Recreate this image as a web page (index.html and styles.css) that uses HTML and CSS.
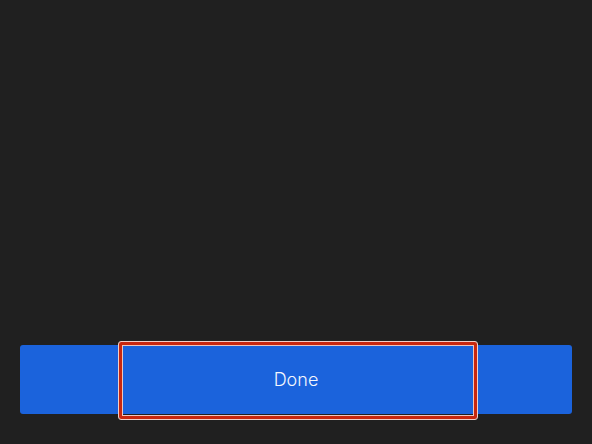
FILE: index.html
```html
<!DOCTYPE html>
<html>
<head>
<meta charset="utf-8">
<link rel="stylesheet" href="styles.css">
</head>
<body>
<main class="screen">
  <div class="footer">
    <button class="done-btn">Done</button>
    <div class="highlight"></div>
  </div>
</main>
</body>
</html>
```
FILE: styles.css
```css
html, body {
  margin: 0;
  padding: 0;
  background: #202020;
}
.screen {
  width: 592px;
  height: 444px;
  display: flex;
  flex-direction: column;
  justify-content: flex-end;
  padding: 0 20px 30px;
  box-sizing: border-box;
}
.footer {
  position: relative;
  height: 69px;
}
.done-btn {
  width: 100%;
  height: 100%;
  border: none;
  border-radius: 3px;
  background: #1b63dc;
  color: #f4f7fd;
  font-family: "Inter", "Noto Sans", sans-serif;
  font-size: 18px;
  font-weight: 300;
  padding: 0;
  display: flex;
  align-items: center;
  justify-content: center;
}
.highlight {
  position: absolute;
  left: 98px;
  top: -4px;
  width: 360px;
  height: 79px;
  box-sizing: border-box;
  border: 1px solid #f1cfc8;
  border-radius: 3px;
  box-shadow: inset 0 0 0 3px #c8270f, inset 0 0 0 4px #eec6bd;
}
```
